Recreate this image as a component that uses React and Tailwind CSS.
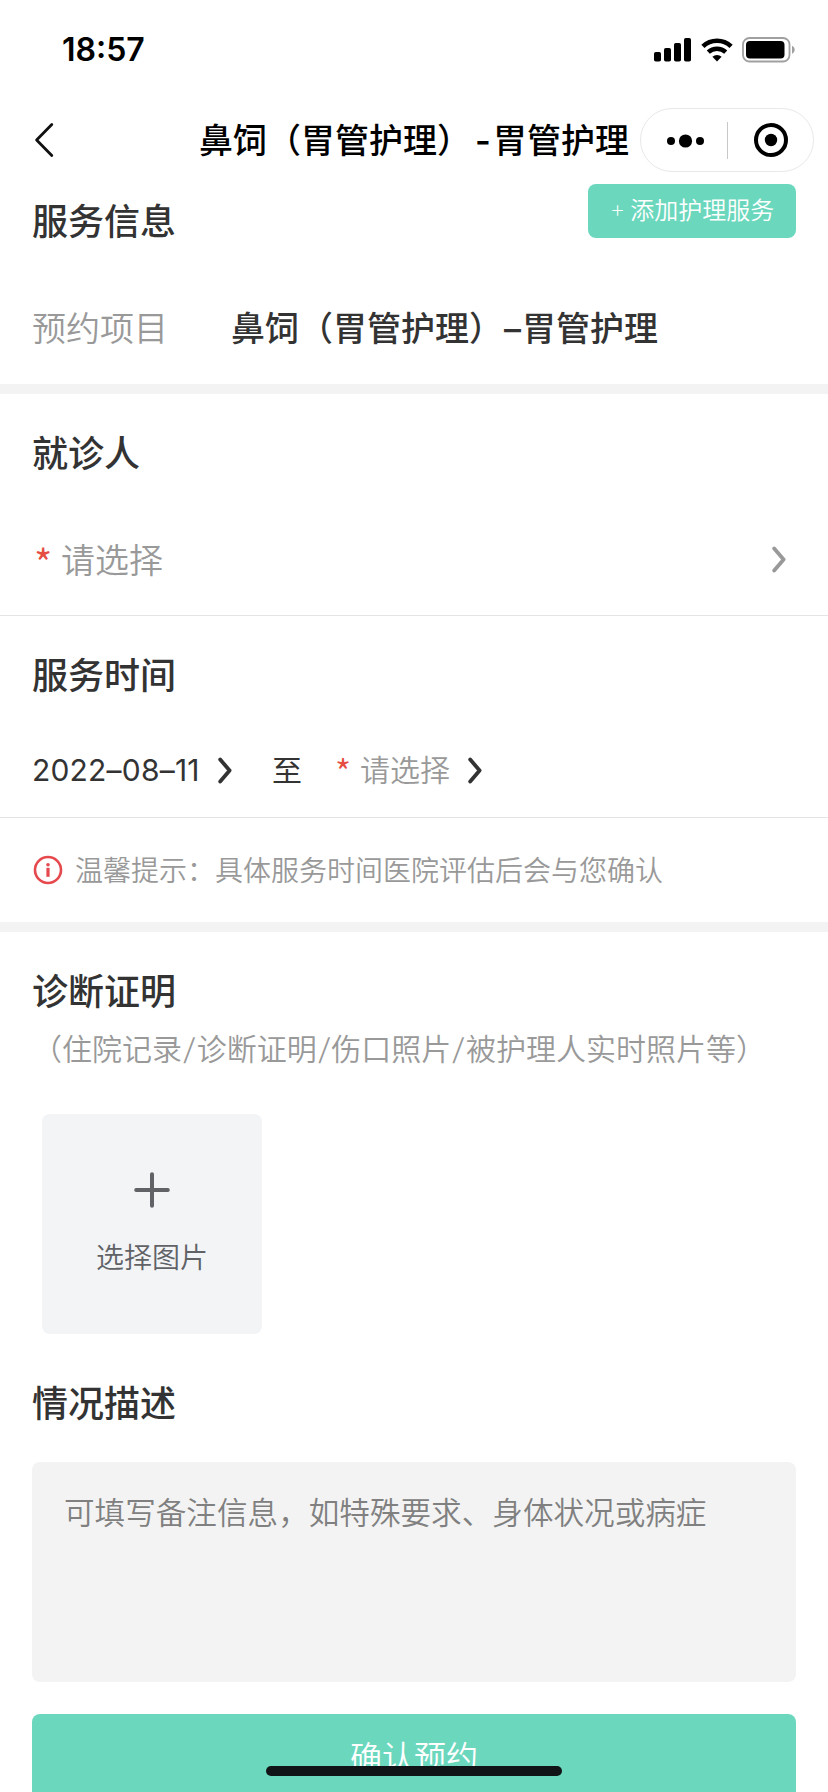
import React, { useState } from 'react';

const PROOF_TYPES = ['（住院记录', '诊断证明', '伤口照片', '被护理人实时照片等）'];

function SignalIcon() {
  return (
    <svg width="38" height="24" viewBox="0 0 38 24" fill="#000">
      <rect x="0" y="14" width="7" height="9.5" rx="1.8" />
      <rect x="10" y="10" width="7" height="13.5" rx="1.8" />
      <rect x="20" y="5" width="7" height="18.5" rx="1.8" />
      <rect x="30" y="0" width="7" height="23.5" rx="1.8" />
    </svg>
  );
}

function WifiIcon() {
  return (
    <svg width="32" height="24" viewBox="0 0 32 24" fill="none" stroke="#000">
      <path d="M1.9 8.3 A 20.5 20.5 0 0 1 30.1 8.3" strokeWidth="4.6" />
      <path d="M7.3 14.2 A 12.5 12.5 0 0 1 24.7 14.2" strokeWidth="4.4" />
      <path d="M11.4 18.8 A 6.6 6.6 0 0 1 20.6 18.8 L 16 23.4 Z" fill="#000" stroke="none" />
    </svg>
  );
}

function BatteryIcon() {
  return (
    <svg width="54" height="26" viewBox="0 0 54 26" fill="none">
      <rect x="1" y="1" width="46.5" height="23.5" rx="6.5" stroke="#a0a0a0" strokeWidth="1.8" />
      <rect x="4" y="4" width="38.5" height="17.5" rx="4" fill="#000" />
      <path d="M50 8.8 C 53.6 10.2 53.6 15.4 50 16.8 Z" fill="#a0a0a0" />
    </svg>
  );
}

function ArrowRight({ color }) {
  return (
    <svg width="14" height="27" viewBox="0 0 14 27" fill="none" stroke={color} strokeWidth="3.8" strokeLinecap="round" strokeLinejoin="round">
      <path d="M2.2 2.5 L11.6 13.5 L2.2 24.5" />
    </svg>
  );
}

function StatusBar() {
  return (
    <div className="flex h-24 items-start justify-between pl-[62px] pr-8">
      <span className="pt-[34px] text-[32px] leading-8 font-semibold text-black">18:57</span>
      <div className="flex items-start pt-[37px]">
        <div className="pt-px"><SignalIcon /></div>
        <div className="ml-[9px] pt-px"><WifiIcon /></div>
        <div className="ml-[9px]"><BatteryIcon /></div>
      </div>
    </div>
  );
}

function NavBar() {
  return (
    <div className="relative flex h-[88px] items-center justify-center">
      <button className="absolute left-[34px] top-[26px]">
        <svg width="20" height="36" viewBox="0 0 20 36" fill="none" stroke="#111" strokeWidth="2.8" strokeLinecap="round" strokeLinejoin="round">
          <path d="M17.8 2.5 L2.6 18 L17.8 33.5" />
        </svg>
      </button>
      <h1 className="pt-0.5 text-[34px] leading-[48px] font-medium whitespace-nowrap text-black">
        鼻饲（胃管护理）<span className="pr-0.5 pl-1 font-semibold">-</span>胃管护理
      </h1>
      {/* Mini program capsule */}
      <div className="absolute right-[14px] top-3 flex h-16 w-[174px] items-center rounded-full border border-[#e8e8e8] bg-white">
        <div className="flex w-[86px] justify-center">
          <svg width="40" height="16" viewBox="0 0 40 16" fill="#000" className="ml-px mt-px">
            <circle cx="6" cy="8" r="4" />
            <circle cx="20.5" cy="8" r="6.6" />
            <circle cx="35" cy="8" r="4" />
          </svg>
        </div>
        <div className="h-[37px] w-px bg-[#c8c8c8]" />
        <div className="flex flex-1 justify-center">
          <svg width="36" height="36" viewBox="0 0 36 36" fill="none">
            <circle cx="18" cy="18" r="15" stroke="#000" strokeWidth="4" />
            <circle cx="18" cy="18" r="6.2" fill="#000" />
          </svg>
        </div>
      </div>
    </div>
  );
}

function Divider() {
  return <div className="h-2.5 bg-[#f3f3f3]" />;
}

export default function App() {
  const [remark, setRemark] = useState('');

  return (
    <div lang="zh-CN" className="relative h-[1792px] w-[828px] overflow-hidden bg-white font-['Inter','Noto_Sans_CJK_SC',sans-serif] text-[#333]">
      <StatusBar />
      <NavBar />

      {/* Service info */}
      <section className="px-8">
        <div className="flex h-[72px] items-start justify-between">
          <h2 className="text-4xl leading-[76px] font-medium">服务信息</h2>
          <button className="flex h-[54px] w-[208px] items-center justify-center gap-[5px] rounded-lg bg-[#6bd7bd] text-2xl font-[350] text-white">
            <span className="pb-1 font-extralight">+</span>
            <span className="pb-px">添加护理服务</span>
          </button>
        </div>
        <div className="flex h-32 items-center pt-[18px] text-[34px] leading-[48px]">
          <span className="w-[199px] font-[350] text-[#999]">预约项目</span>
          <span className="font-medium">鼻饲（胃管护理）<span className="px-px">–</span>胃管护理</span>
        </div>
      </section>
      <Divider />

      {/* Patient */}
      <section>
        <h2 className="h-[118px] px-8 text-4xl leading-[120px] font-medium">就诊人</h2>
        <div className="flex h-[104px] items-center border-b border-[#e4e4e4] pr-[42px] pb-[9px] pl-8 text-[34px] leading-[48px] font-[350]">
          <span className="w-[29px] pt-1.5 pl-0.5 font-['Noto_Sans_CJK_SC',sans-serif] text-[40px] text-[#e54d42]">*</span>
          <span className="flex-1 pt-1 text-[#999]">请选择</span>
          <ArrowRight color="#999" />
        </div>
      </section>

      {/* Service time */}
      <section>
        <h2 className="h-[118px] px-8 text-4xl leading-[120px] font-medium">服务时间</h2>
        <div className="flex h-[84px] items-center border-b border-[#e4e4e4] px-8 pb-2.5 text-[30px] leading-[42px] font-[350]">
          <span className="w-[186px] pb-0.5 font-normal tracking-[0.2px]">2022–08–11</span>
          <ArrowRight color="#333" />
          <span className="ml-10 w-[62px] pb-px font-normal">至</span>
          <span className="w-[26px] pl-px font-['Noto_Sans_CJK_SC',sans-serif] text-[35px] text-[#e54d42]">*</span>
          <span className="w-[108px] pb-px text-[#999]">请选择</span>
          <ArrowRight color="#333" />
        </div>
        <div className="flex h-[104px] items-center px-8 text-[28px] leading-10 font-[350] text-[#999]">
          <svg width="32" height="32" viewBox="0 0 32 32" fill="none" className="mr-[11px]">
            <circle cx="16" cy="16" r="13" stroke="#e5484d" strokeWidth="2.6" />
            <circle cx="16" cy="10.8" r="1.8" fill="#e5484d" />
            <rect x="14.4" y="13.8" width="3.2" height="9" fill="#e5484d" />
          </svg>
          <span className="pt-0.5">温馨提示：具体服务时间医院评估后会与您确认</span>
        </div>
      </section>
      <Divider />

      {/* Diagnosis proof */}
      <section className="px-8 pt-[42px]">
        <h2 className="text-4xl leading-9 font-medium">诊断证明</h2>
        <p className="mt-[21px] text-[30px] leading-9 font-[350] whitespace-nowrap text-[#999]">
          {PROOF_TYPES.map((type, i) => (
            <span key={type}>{i > 0 && <span className="inline-block -skew-x-6 px-[2.1px]">/</span>}{type}</span>
          ))}
        </p>
        <button className="mt-[47px] ml-2.5 flex h-[220px] w-[220px] flex-col items-center rounded-lg bg-[#f3f4f6] pt-[58px] text-[#606266]">
          <svg width="36" height="36" viewBox="0 0 36 36" stroke="#606266" strokeWidth="4" strokeLinecap="round">
            <path d="M18 2.2 V33.8 M2.2 18 H33.8" />
          </svg>
          <span className="mt-[30px] text-[28px] leading-10 font-[350]">选择图片</span>
        </button>
      </section>

      {/* Description */}
      <section className="px-8 pt-[52px]">
        <h2 className="text-4xl leading-9 font-medium">情况描述</h2>
        <textarea
          value={remark}
          onChange={e => setRemark(e.target.value)}
          placeholder="可填写备注信息，如特殊要求、身体状况或病症"
          className="mt-10 block h-[220px] w-full resize-none rounded-lg bg-[#f3f3f3] px-8 pt-[33px] text-[30.6px] leading-9 font-[350] placeholder:text-[#808080] focus:outline-none"
        />
        <button className="mt-8 block h-[88px] w-full rounded-lg bg-[#6bd7bd] text-[32px] leading-[88px] font-[350] text-white">确认预约</button>
      </section>

      {/* Home indicator */}
      <div className="absolute top-[1766px] left-[266px] h-2.5 w-[296px] rounded-full bg-[#111417]" />
    </div>
  );
}
